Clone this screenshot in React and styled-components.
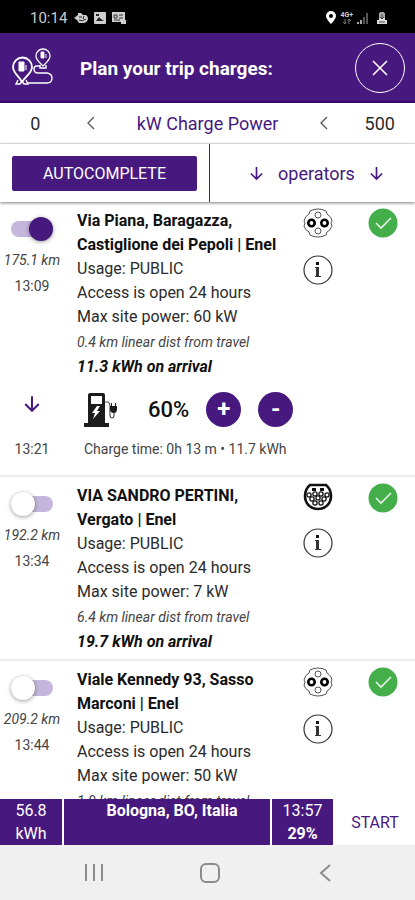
/** @format */
import React, { useState } from "react";
import styled, { createGlobalStyle } from "styled-components";

const stations = [
  {
    id: "piana",
    name: "Via Piana, Baragazza, Castiglione dei Pepoli | Enel",
    power: "60 kW",
    dist: "0.4 km",
    arrival: "11.3 kWh",
    km: "175.1 km",
    time: "13:09",
    plug: "ccs",
    selected: true,
    charge: { leave: "13:21", percent: 60, text: "0h 13 m • 11.7 kWh" },
  },
  {
    id: "pertini",
    name: "VIA SANDRO PERTINI, Vergato | Enel",
    power: "7 kW",
    dist: "6.4 km",
    arrival: "19.7 kWh",
    km: "192.2 km",
    time: "13:34",
    plug: "type2",
  },
  {
    id: "kennedy",
    name: "Viale Kennedy 93, Sasso Marconi | Enel",
    power: "50 kW",
    dist: "1.9 km",
    km: "209.2 km",
    time: "13:44",
    plug: "ccs",
  },
];

function App() {
  return (
    <Screen>
      <GlobalStyle />
      <StatusBar />
      <Header>
        <RouteIcon />
        <h1>Plan your trip charges:</h1>
        <CloseButton aria-label="Close">
          <svg width="18" height="18" viewBox="0 0 18 18">
            <path d="M2 2L16 16M16 2L2 16" stroke="#fff" strokeWidth="1.6" />
          </svg>
        </CloseButton>
      </Header>
      <PowerBar>
        <span>0</span>
        <ChevronIcon />
        <PowerLabel>kW Charge Power</PowerLabel>
        <ChevronIcon />
        <span>500</span>
      </PowerBar>
      <ActionBar>
        <ActionCell>
          <FilledButton>AUTOCOMPLETE</FilledButton>
        </ActionCell>
        <ActionCell $divided>
          <TextButton>
            <ArrowIcon />
            operators
            <ArrowIcon />
          </TextButton>
        </ActionCell>
      </ActionBar>
      <List>
        {stations.map((station) => (
          <Station key={station.id} {...station} />
        ))}
      </List>
      <Footer>
        <FooterCell $grow={62}>
          <span>56.8</span>
          <span>kWh</span>
        </FooterCell>
        <FooterCell $grow={206}>
          <Destination>Bologna, BO, Italia</Destination>
        </FooterCell>
        <FooterCell $grow={61}>
          <span>13:57</span>
          <b>29%</b>
        </FooterCell>
        <StartButton>START</StartButton>
      </Footer>
      <NavBar>
        <NavButton aria-label="Recent apps">
          <svg width="20" height="20" viewBox="0 0 20 20">
            <path d="M2 1V18M10 1V18M18 1V18" stroke="#8b8b8b" strokeWidth="2" />
          </svg>
        </NavButton>
        <NavButton aria-label="Home">
          <svg width="20" height="20" viewBox="0 0 20 20" fill="none">
            <rect x="1" y="1" width="18" height="18" rx="5" stroke="#8b8b8b" strokeWidth="2" />
          </svg>
        </NavButton>
        <NavButton aria-label="Back">
          <svg width="20" height="20" viewBox="0 0 20 20" fill="none">
            <path d="M14 2L5 10L14 18" stroke="#8b8b8b" strokeWidth="2" />
          </svg>
        </NavButton>
      </NavBar>
    </Screen>
  );
}

export default App;

function Station({ id, name, power, dist, arrival, km, time, plug, selected, charge }) {
  const [on, setOn] = useState(Boolean(selected));
  const [percent, setPercent] = useState(charge ? charge.percent : 0);

  return (
    <Item>
      <Row>
        <Side>
          <Toggle
            type="checkbox"
            id={id}
            aria-label={name}
            checked={on}
            onChange={(e) => setOn(e.target.checked)}
          />
          <Km>{km}</Km>
          <Time>{time}</Time>
        </Side>
        <Info>
          <h2>{name}</h2>
          <p>Usage: PUBLIC</p>
          <p>Access is open 24 hours</p>
          <p>Max site power: {power}</p>
          <Distance>{dist} linear dist from travel</Distance>
          {arrival && <Arrival>{arrival} on arrival</Arrival>}
        </Info>
        <Icons>
          {plug === "ccs" ? <CcsIcon /> : <Type2Icon />}
          <IconButton aria-label="Station details">
            <InfoIcon />
          </IconButton>
        </Icons>
        <Available>
          <CheckIcon />
        </Available>
      </Row>
      {charge && (
        <Charge>
          <Side>
            <ArrowBox>
              <ArrowIcon size={18} />
            </ArrowBox>
            <Time>{charge.leave}</Time>
          </Side>
          <ChargeBody>
            <ChargeControls>
              <PumpIcon />
              <Percent>{percent}%</Percent>
              <RoundButton aria-label="More charge" onClick={() => setPercent(percent + 5)}>
                +
              </RoundButton>
              <RoundButton aria-label="Less charge" onClick={() => setPercent(percent - 5)}>
                -
              </RoundButton>
            </ChargeControls>
            <ChargeTime>Charge time: {charge.text}</ChargeTime>
          </ChargeBody>
        </Charge>
      )}
    </Item>
  );
}

function StatusBar() {
  return (
    <Status>
      <span>10:14</span>
      <svg width="54" height="14" viewBox="0 0 54 14">
        <g fill="#cfcfcf">
          <path d="M0 7L4 4V2H7L9 4H12Q14 5 14 8Q13 12 9 12H5L3 9Z" />
          <rect x="20" y="1" width="12" height="12" rx="1" />
          <path d="M38 1H51V9H52V13H47V11H38Z" />
        </g>
        <path d="M5 6H8M5 9Q8 11 12 8M10 5L9 8" fill="none" stroke="#222" />
        <path d="M22 10L25 6L27 8L30 10ZM22 3H25V5H22Z" fill="#222" />
        <path d="M40 4H43V7H40ZM45 4H49M45 7H49M40 9H46" fill="none" stroke="#333" />
      </svg>
      <Signals>
        <svg width="10" height="13" viewBox="0 0 10 13">
          <path
            d="M5 0A5 5 0 0 0 0 5C0 8 5 13 5 13S10 8 10 5A5 5 0 0 0 5 0ZM5 3A2 2 0 1 1 5 7A2 2 0 0 1 5 3Z"
            fill="#fff"
            fillRule="evenodd"
          />
        </svg>
        <Network>
          <b>4G+</b>
          <svg width="8" height="5" viewBox="0 0 8 5">
            <path d="M2 0V4M0 3L2 5L3 3M6 5V1M5 2L6 0L8 2" stroke="#777" fill="none" />
          </svg>
        </Network>
        <svg width="12" height="12" viewBox="0 0 12 12">
          <path d="M1 12V10M4 12V8" stroke="#aaa" strokeWidth="2" />
          <path d="M7 12V5M10 12V1" stroke="#555" strokeWidth="2" />
        </svg>
        <svg width="14" height="12" viewBox="-4 0 14 12">
          <path d="M3 0H7V1H8V6H2V1H3Z" fill="#aaa" />
          <path d="M2 6H8V8H10V12H0V8H2Z" fill="#ddd" />
          <path d="M5 2V7M3 5L5 7L7 5M2 10H8" stroke="#444" fill="none" />
        </svg>
      </Signals>
    </Status>
  );
}

function RouteIcon() {
  return (
    <svg width="42" height="40" viewBox="0 0 42 40" fill="none" stroke="#fff">
      <path
        strokeWidth="1.8"
        d="M10 34C7 28 1 25 1 19A9 9 0 0 1 20 19C20 25 14 28 10 34Z"
      />
      <path
        strokeWidth="1.3"
        d="M31 18C28 15 24 12 24 8A7 7 0 0 1 38 8C38 12 34 15 31 18Z"
      />
      <path d="M7 14H12V23H7ZM14 17V22" fill="#fff" />
      <path d="M29 4H32V10H29ZM34 6V10" fill="#fff" strokeWidth="0.9" />
      <path
        strokeWidth="1.4"
        d="M28 18H25Q22 18 22 21Q22 25 26 25H35Q40 26 40 30Q40 35 35 35H15"
      />
      <path strokeWidth="1.4" d="M28 17V20H34V17M6 32L4 36H8L10 33L12 36H16L14 32" />
    </svg>
  );
}

function ChevronIcon() {
  return (
    <svg width="18" height="18" viewBox="0 0 18 18" fill="none">
      <path d="M12 3L6 9L12 15" stroke="#555" strokeWidth="1.3" />
    </svg>
  );
}

function ArrowIcon({ size = 15 }) {
  return (
    <svg width={size} height={size} viewBox="0 0 16 16" fill="none">
      <path d="M8 1V14M2 8L8 14L14 8" stroke="#47197f" strokeWidth="1.8" />
    </svg>
  );
}

function CcsIcon() {
  return (
    <svg width="30" height="30" viewBox="0 0 30 30" fill="none" stroke="#555">
      <path d="M7 3Q15 -1 23 3L24 6Q29 9 29 13L28 15L29 18Q27 23 24 24L23 27Q15 31 7 27L6 24Q2 22 1 18L2 15L1 13Q2 8 6 6Z" />
      <circle cx="15" cy="7" r="3" />
      <circle cx="15" cy="23" r="3" />
      <circle cx="8.5" cy="15" r="3.2" stroke="#000" strokeWidth="2.6" />
      <circle cx="21.5" cy="15" r="3.2" stroke="#000" strokeWidth="2.6" />
    </svg>
  );
}

function Type2Icon() {
  const pins = [
    [6, 12], [12, 11], [18, 11], [24, 12],
    [9, 16], [15, 15], [21, 16],
    [12, 20], [18, 20],
  ];
  return (
    <svg width="30" height="28" viewBox="0 0 30 28" fill="none" stroke="#111">
      <path d="M7 2H23Q28 6 28 13C28 20 23 26 15 26C7 26 2 20 2 13Q2 6 7 2Z" strokeWidth="2.6" />
      {pins.map(([x, y]) => (
        <circle key={`${x}-${y}`} cx={x} cy={y} r="2.1" strokeWidth="1.3" />
      ))}
      <path d="M11 5V8M19 5V8" strokeWidth="4" />
    </svg>
  );
}

function InfoIcon() {
  return (
    <svg width="30" height="30" viewBox="0 0 30 30" fill="none">
      <circle cx="15" cy="15" r="14" stroke="#333" strokeWidth="1.2" />
      <path d="M13 7H16V10H13Z" fill="#111" />
      <path d="M12 12H16V21H18V22H12V21H13V13H12Z" fill="#333" />
    </svg>
  );
}

function CheckIcon() {
  return (
    <svg width="30" height="30" viewBox="0 0 30 30" fill="none">
      <circle cx="15" cy="15" r="14.5" fill="#44ae4a" />
      <path d="M8 15L13 20L23 10" stroke="#e6f6e6" strokeWidth="1.6" />
    </svg>
  );
}

function PumpIcon() {
  return (
    <svg width="34" height="36" viewBox="0 0 34 36">
      <path
        d="M6 1H19Q21 1 21 3V31H25V35H0V31H4V3Q4 1 6 1ZM7 4V12H18V4Z"
        fill="#1c1c1c"
        fillRule="evenodd"
      />
      <path d="M13 14L8 21H11L9 27L16 19H13L16 14Z" fill="#fff" />
      <path
        d="M21 10H24Q26 11 26 14V23Q26 26 28 26Q30 26 30 23V20"
        fill="none"
        stroke="#555"
        strokeWidth="1.2"
      />
      <path d="M26 14H33V17Q33 21 30 21Q26 21 26 17ZM27 11H28V14H27ZM31 11H32V14H31Z" fill="#1c1c1c" />
    </svg>
  );
}

const purple = "#47197f";

const GlobalStyle = createGlobalStyle`
  * {
    box-sizing: border-box;
  }
  body {
    margin: 0;
    background: #fff;
    color: #2b2b2b;
    font-family: Roboto, "Liberation Sans", sans-serif;
    font-size: 16px;
  }
  h1, h2, p {
    margin: 0;
  }
  button {
    border: 0;
    padding: 0;
    background: none;
    font-family: inherit;
    cursor: pointer;
  }
  svg {
    display: block;
    flex: none;
  }
`;

const Screen = styled.div`
  height: 100vh;
  display: flex;
  flex-direction: column;
  overflow: hidden;
`;

const Status = styled.div`
  flex: none;
  height: 33px;
  padding: 2px 28px 0 30px;
  display: flex;
  align-items: center;
  gap: 7px;
  background: #000;
  color: #ccc;
  font-size: 15px;
`;

const Signals = styled.div`
  display: flex;
  align-items: center;
  gap: 4px;
  margin-left: auto;
`;

const Network = styled.div`
  display: flex;
  flex-direction: column;
  align-items: center;
  font-size: 7px;
  line-height: 7px;
`;

const Header = styled.header`
  flex: none;
  height: 70px;
  padding: 2px 10px 0 12px;
  display: flex;
  align-items: center;
  background: ${purple};
  border-bottom: 2px solid #38086e;
  color: #fff;
  h1 {
    flex: 1;
    padding-left: 26px;
    font-size: 19px;
    font-weight: 700;
  }
`;

const CloseButton = styled.button`
  width: 50px;
  height: 50px;
  display: flex;
  justify-content: center;
  align-items: center;
  border: 1px solid #fff;
  border-radius: 50%;
`;

const PowerBar = styled.div`
  flex: none;
  height: 41px;
  display: grid;
  grid-template-columns: 17% 10% 1fr 10% 17%;
  align-items: center;
  justify-items: center;
  border-bottom: 1px solid #e8e8e8;
  font-size: 18px;
`;

const PowerLabel = styled.span`
  color: ${purple};
`;

const ActionBar = styled.div`
  flex: none;
  height: 58px;
  display: flex;
  position: relative;
  z-index: 1;
  background: #fff;
  box-shadow: 0 1px 3px rgba(0, 0, 0, 0.5);
`;

const ActionCell = styled.div`
  flex: 1;
  display: flex;
  justify-content: center;
  align-items: center;
  padding: ${(props) => (props.$divided ? "0 6px 0 14px" : "0 12px")};
  border-left: ${(props) => (props.$divided ? `1px solid ${purple}` : "0")};
`;

const FilledButton = styled.button`
  width: 100%;
  height: 35px;
  border-radius: 2px;
  background: ${purple};
  color: #fff;
  font-size: 16px;
`;

const TextButton = styled.button`
  display: flex;
  align-items: center;
  gap: 14px;
  color: ${purple};
  font-size: 18px;
`;

const List = styled.main`
  flex: 1;
  min-height: 0;
  overflow: hidden;
`;

const Item = styled.section`
  border-bottom: 2px solid #ececec;
`;

const Row = styled.div`
  display: flex;
  padding: 6px 0 5px;
`;

const Side = styled.div`
  flex: none;
  width: 64px;
  display: flex;
  flex-direction: column;
  align-items: center;
`;

const Toggle = styled.input`
  appearance: none;
  display: flex;
  align-items: center;
  justify-content: ${(props) => (props.checked ? "flex-end" : "flex-start")};
  width: 42px;
  height: 16px;
  margin: 13px 0 11px;
  border-radius: 8px;
  background: #c5b6dc;
  &::before {
    content: "";
    flex: none;
    width: 24px;
    height: 24px;
    border-radius: 50%;
    background: ${(props) => (props.checked ? purple : "#fff")};
    box-shadow: 0 1px 4px rgba(0, 0, 0, 0.4);
  }
`;

const Km = styled.span`
  color: #444;
  font-size: 14px;
  font-style: italic;
  line-height: 24px;
`;

const Time = styled.span`
  color: #444;
  font-size: 14px;
  line-height: 28px;
`;

const Info = styled.div`
  flex: 1;
  padding: 1px 0 0 13px;
  line-height: 24px;
  h2 {
    color: #111;
    font-size: 16px;
    font-weight: 700;
  }
`;

const Distance = styled.p`
  color: #444;
  font-size: 14px;
  font-style: italic;
  line-height: 26px;
`;

const Arrival = styled.p`
  color: #111;
  font-weight: 700;
  font-style: italic;
`;

const Icons = styled.div`
  flex: none;
  width: 66px;
  display: flex;
  flex-direction: column;
  align-items: center;
  gap: 17px;
`;

const IconButton = styled.button``;

const Available = styled.div`
  flex: none;
  width: 64px;
  display: flex;
  justify-content: center;
`;

const Charge = styled.div`
  display: flex;
  padding: 8px 0 12px;
`;

const ArrowBox = styled.div`
  height: 43px;
  padding-top: 3px;
`;

const ChargeBody = styled.div`
  flex: 1;
  padding-left: 20px;
`;

const ChargeControls = styled.div`
  height: 43px;
  display: flex;
  align-items: flex-start;
`;

const Percent = styled.span`
  padding: 0 17px 0 30px;
  color: #111;
  font-size: 22px;
  font-weight: 500;
  line-height: 36px;
`;

const RoundButton = styled.button`
  width: 35px;
  height: 35px;
  margin-right: 17px;
  border-radius: 50%;
  background: ${purple};
  color: #fff;
  font-size: 24px;
  font-weight: 700;
  line-height: 35px;
`;

const ChargeTime = styled.p`
  color: #444;
  font-size: 14px;
  line-height: 28px;
`;

const Footer = styled.footer`
  flex: none;
  height: 46px;
  display: flex;
  gap: 2px;
  position: relative;
  z-index: 1;
  background: #fff;
`;

const FooterCell = styled.div`
  flex: ${(props) => props.$grow} 1 0;
  display: flex;
  flex-direction: column;
  align-items: center;
  background: ${purple};
  color: #fff;
  font-size: 16px;
  line-height: 23px;
`;

const Destination = styled.b`
  padding-left: 10px;
`;

const StartButton = styled.button`
  flex: 80 1 0;
  color: ${purple};
  font-size: 16px;
`;

const NavBar = styled.nav`
  flex: none;
  height: 55px;
  padding: 0 31px 0 36px;
  display: flex;
  background: #f0f0f0;
`;

const NavButton = styled.button`
  flex: 1;
  display: flex;
  justify-content: center;
  align-items: center;
`;
